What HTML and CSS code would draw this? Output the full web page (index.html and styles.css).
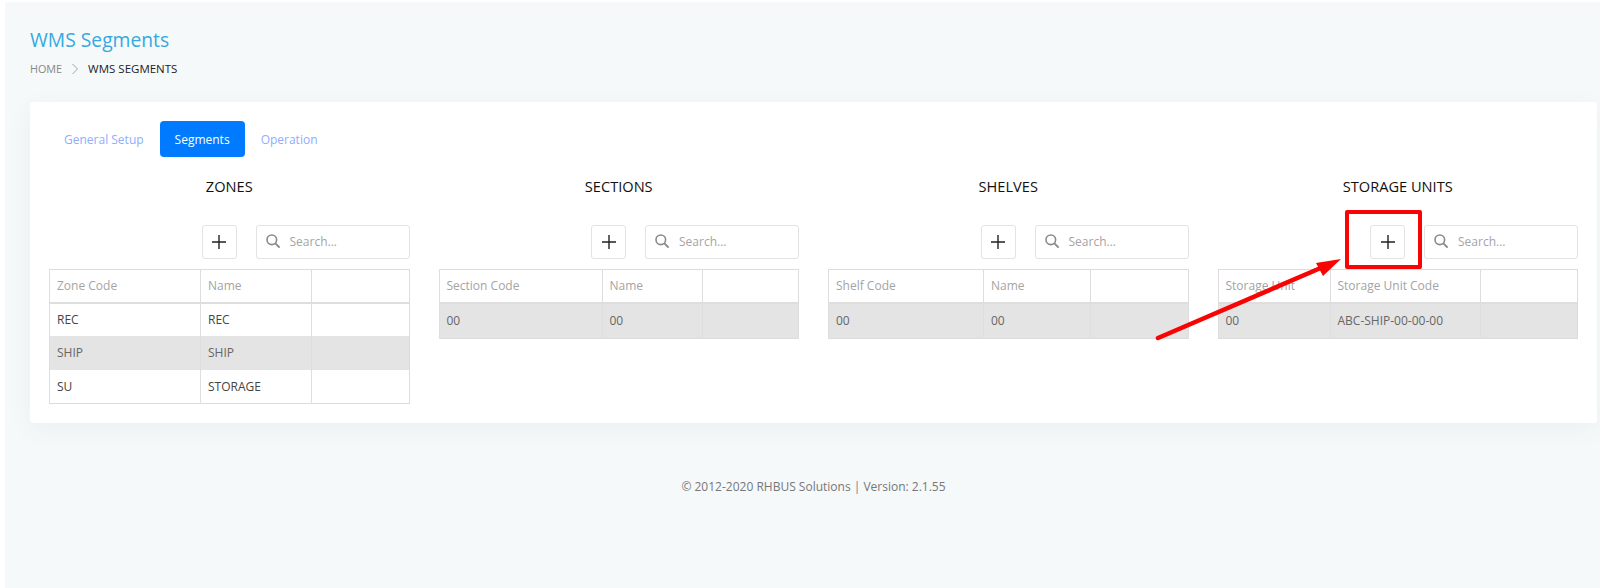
FILE: index.html
```html
<!DOCTYPE html>
<html lang="en">
<head>
<meta charset="utf-8">
<title>WMS Segments</title>
<link rel="stylesheet" href="styles.css">
</head>
<body>
<main class="page">
  <header class="head">
    <h1 class="title">WMS Segments</h1>
    <nav class="crumbs">
      <span class="crumb">HOME</span>
      <svg class="crumb-sep" viewBox="0 0 8 12" width="8" height="12"><path d="M1.5 1l5 5-5 5" fill="none" stroke="#999" stroke-width="0.9"/></svg>
      <span class="crumb crumb-current">WMS SEGMENTS</span>
    </nav>
  </header>

  <section class="card">
    <nav class="tabs">
      <a class="tab">General Setup</a>
      <a class="tab tab-active">Segments</a>
      <a class="tab">Operation</a>
    </nav>
    <div class="grid">
      <div class="panel">
        <h2 class="panel-title">ZONES</h2>
        <div class="tools">
          <button class="add"><svg viewBox="0 0 16 16" width="16" height="16"><path d="M8 1v14M1 8h14" stroke="#222" stroke-width="1.4" fill="none"/></svg></button>
          <label class="search"><svg viewBox="0 0 16 16" width="16" height="16"><circle cx="6.8" cy="6.8" r="4.8" fill="none" stroke="#8a8a8a" stroke-width="1.6"/><path d="M10.4 10.4l4.2 4.2" stroke="#8a8a8a" stroke-width="2"/></svg><span class="ph">Search...</span></label>
        </div>
        <table class="tbl tbl-zones">
          <colgroup><col class="c1"><col class="c2"><col></colgroup>
          <thead><tr><th>Zone Code</th><th>Name</th><th></th></tr></thead>
          <tbody>
            <tr><td>REC</td><td>REC</td><td></td></tr>
            <tr class="sel"><td>SHIP</td><td>SHIP</td><td></td></tr>
            <tr class="last"><td>SU</td><td>STORAGE</td><td></td></tr>
          </tbody>
        </table>
      </div>
      <div class="panel">
        <h2 class="panel-title">SECTIONS</h2>
        <div class="tools">
          <button class="add"><svg viewBox="0 0 16 16" width="16" height="16"><path d="M8 1v14M1 8h14" stroke="#222" stroke-width="1.4" fill="none"/></svg></button>
          <label class="search"><svg viewBox="0 0 16 16" width="16" height="16"><circle cx="6.8" cy="6.8" r="4.8" fill="none" stroke="#8a8a8a" stroke-width="1.6"/><path d="M10.4 10.4l4.2 4.2" stroke="#8a8a8a" stroke-width="2"/></svg><span class="ph">Search...</span></label>
        </div>
        <table class="tbl tbl-sections tbl-single">
          <colgroup><col class="c1"><col class="c2"><col></colgroup>
          <thead><tr><th>Section Code</th><th>Name</th><th></th></tr></thead>
          <tbody><tr class="sel"><td>00</td><td>00</td><td></td></tr></tbody>
        </table>
      </div>
      <div class="panel">
        <h2 class="panel-title">SHELVES</h2>
        <div class="tools">
          <button class="add"><svg viewBox="0 0 16 16" width="16" height="16"><path d="M8 1v14M1 8h14" stroke="#222" stroke-width="1.4" fill="none"/></svg></button>
          <label class="search"><svg viewBox="0 0 16 16" width="16" height="16"><circle cx="6.8" cy="6.8" r="4.8" fill="none" stroke="#8a8a8a" stroke-width="1.6"/><path d="M10.4 10.4l4.2 4.2" stroke="#8a8a8a" stroke-width="2"/></svg><span class="ph">Search...</span></label>
        </div>
        <table class="tbl tbl-shelves tbl-single">
          <colgroup><col class="c1"><col class="c2"><col></colgroup>
          <thead><tr><th>Shelf Code</th><th>Name</th><th></th></tr></thead>
          <tbody><tr class="sel"><td>00</td><td>00</td><td></td></tr></tbody>
        </table>
      </div>
      <div class="panel">
        <h2 class="panel-title">STORAGE UNITS</h2>
        <div class="tools">
          <button class="add"><svg viewBox="0 0 16 16" width="16" height="16"><path d="M8 1v14M1 8h14" stroke="#222" stroke-width="1.4" fill="none"/></svg></button>
          <label class="search"><svg viewBox="0 0 16 16" width="16" height="16"><circle cx="6.8" cy="6.8" r="4.8" fill="none" stroke="#8a8a8a" stroke-width="1.6"/><path d="M10.4 10.4l4.2 4.2" stroke="#8a8a8a" stroke-width="2"/></svg><span class="ph">Search...</span></label>
        </div>
        <table class="tbl tbl-units tbl-single">
          <colgroup><col class="c1"><col class="c2"><col></colgroup>
          <thead><tr><th>Storage Unit</th><th>Storage Unit Code</th><th></th></tr></thead>
          <tbody><tr class="sel"><td>00</td><td>ABC-SHIP-00-00-00</td><td></td></tr></tbody>
        </table>
      </div>
    </div>
  </section>

  <footer class="foot">© 2012-2020 RHBUS Solutions | Version: 2.1.55</footer>
</main>

<div class="redbox"></div>
<svg class="arrow" viewBox="0 0 200 90" width="200" height="90">
  <path d="M3 83L168 12" stroke="#f80404" stroke-width="4.5" stroke-linecap="round" fill="none"/>
  <path d="M186 4L161 8L168 21Z" fill="#f80404"/>
</svg>
</body>
</html>
```
FILE: styles.css
```css
* { box-sizing: border-box; }
html, body { margin: 0; height: 100%; background: #fff; }
body {
  font-family: "Open Sans", "Noto Sans", "Liberation Sans", sans-serif;
  color: #333;
  overflow: hidden;
  padding: 2px 0 0 5px;
}
.page {
  height: 586px;
  background: #f5f9fa;
  padding: 24px 3px 0 25px;
}
.title {
  margin: 0;
  font-size: 19.3px;
  font-weight: 400;
  line-height: 27px;
  color: #36a9e1;
}
.crumbs {
  display: flex;
  align-items: center;
  height: 14px;
  margin-top: 9px;
  gap: 8px;
}
.crumb { font-size: 10.8px; color: #888; line-height: 14px; }
.crumb-current { color: #222; font-size: 11.5px; }
.crumb-sep { margin: 0 1px; }
.card {
  margin-top: 26px;
  height: 321px;
  background: #fff;
  border-radius: 3px;
  padding: 19px 19px 0;
  box-shadow: 0 6px 24px rgba(60, 80, 90, 0.06);
}
.tabs { display: flex; }
.tab {
  display: block;
  height: 36px;
  line-height: 37px;
  padding: 0 15px;
  font-size: 12px;
  color: #8eaeff;
  border-radius: 4px;
}
.tab-active { background: #007bff; color: #fff; margin: 0 1px; }
.grid {
  display: grid;
  grid-template-columns: repeat(4, 1fr);
  column-gap: 29px;
  margin-top: 18px;
}
.panel-title {
  margin: 0;
  font-size: 14.6px;
  font-weight: 400;
  line-height: 22px;
  color: #111;
  text-align: center;
}
.tools {
  display: flex;
  justify-content: flex-end;
  gap: 19px;
  margin-top: 28px;
}
.add {
  width: 35px;
  height: 34px;
  padding: 0;
  background: #fff;
  border: 1px solid #e3e3e3;
  border-radius: 3px;
  display: flex;
  align-items: center;
  justify-content: center;
}
.search {
  width: 154px;
  height: 34px;
  background: #fff;
  border: 1px solid #e3e3e3;
  border-radius: 3px;
  display: flex;
  align-items: center;
  gap: 9px;
  padding: 0 0 2px 8px;
}
.ph { font-size: 12px; color: #a4a4a4; }
.tbl {
  width: 100%;
  table-layout: fixed;
  border-collapse: collapse;
  margin-top: 10px;
  font-size: 12px;
  border: 1px solid #dcdcdc;
  background: #fff;
}
.tbl th, .tbl td {
  border-left: 1px solid #dedede;
  padding: 0 7px;
  text-align: left;
  font-weight: 400;
  white-space: nowrap;
  overflow: hidden;
}
.tbl th { height: 33px; color: #a4a4a4; border-bottom: 2px solid #dedede; }
.tbl td { height: 33px; color: #444; }
.tbl .last td { height: 34px; }
.tbl .sel td { height: 34px; background: #e4e4e4; color: #666; }
.tbl-single .sel td { height: 36px; }
.tbl-zones .c1 { width: 151px; }
.tbl-zones .c2 { width: 111px; }
.tbl-sections .c1 { width: 163px; }
.tbl-sections .c2 { width: 100px; }
.tbl-shelves .c1 { width: 155px; }
.tbl-shelves .c2 { width: 107px; }
.tbl-units .c1 { width: 112px; }
.tbl-units .c2 { width: 150px; }
.foot {
  margin-top: 55px;
  text-align: center;
  font-size: 12px;
  line-height: 18px;
  color: #777;
}
.redbox {
  position: absolute;
  left: 1345px;
  top: 210px;
  width: 77px;
  height: 59px;
  border: 4px solid #f80404;
  border-radius: 2px;
}
.arrow {
  position: absolute;
  left: 1155px;
  top: 255px;
}
```
